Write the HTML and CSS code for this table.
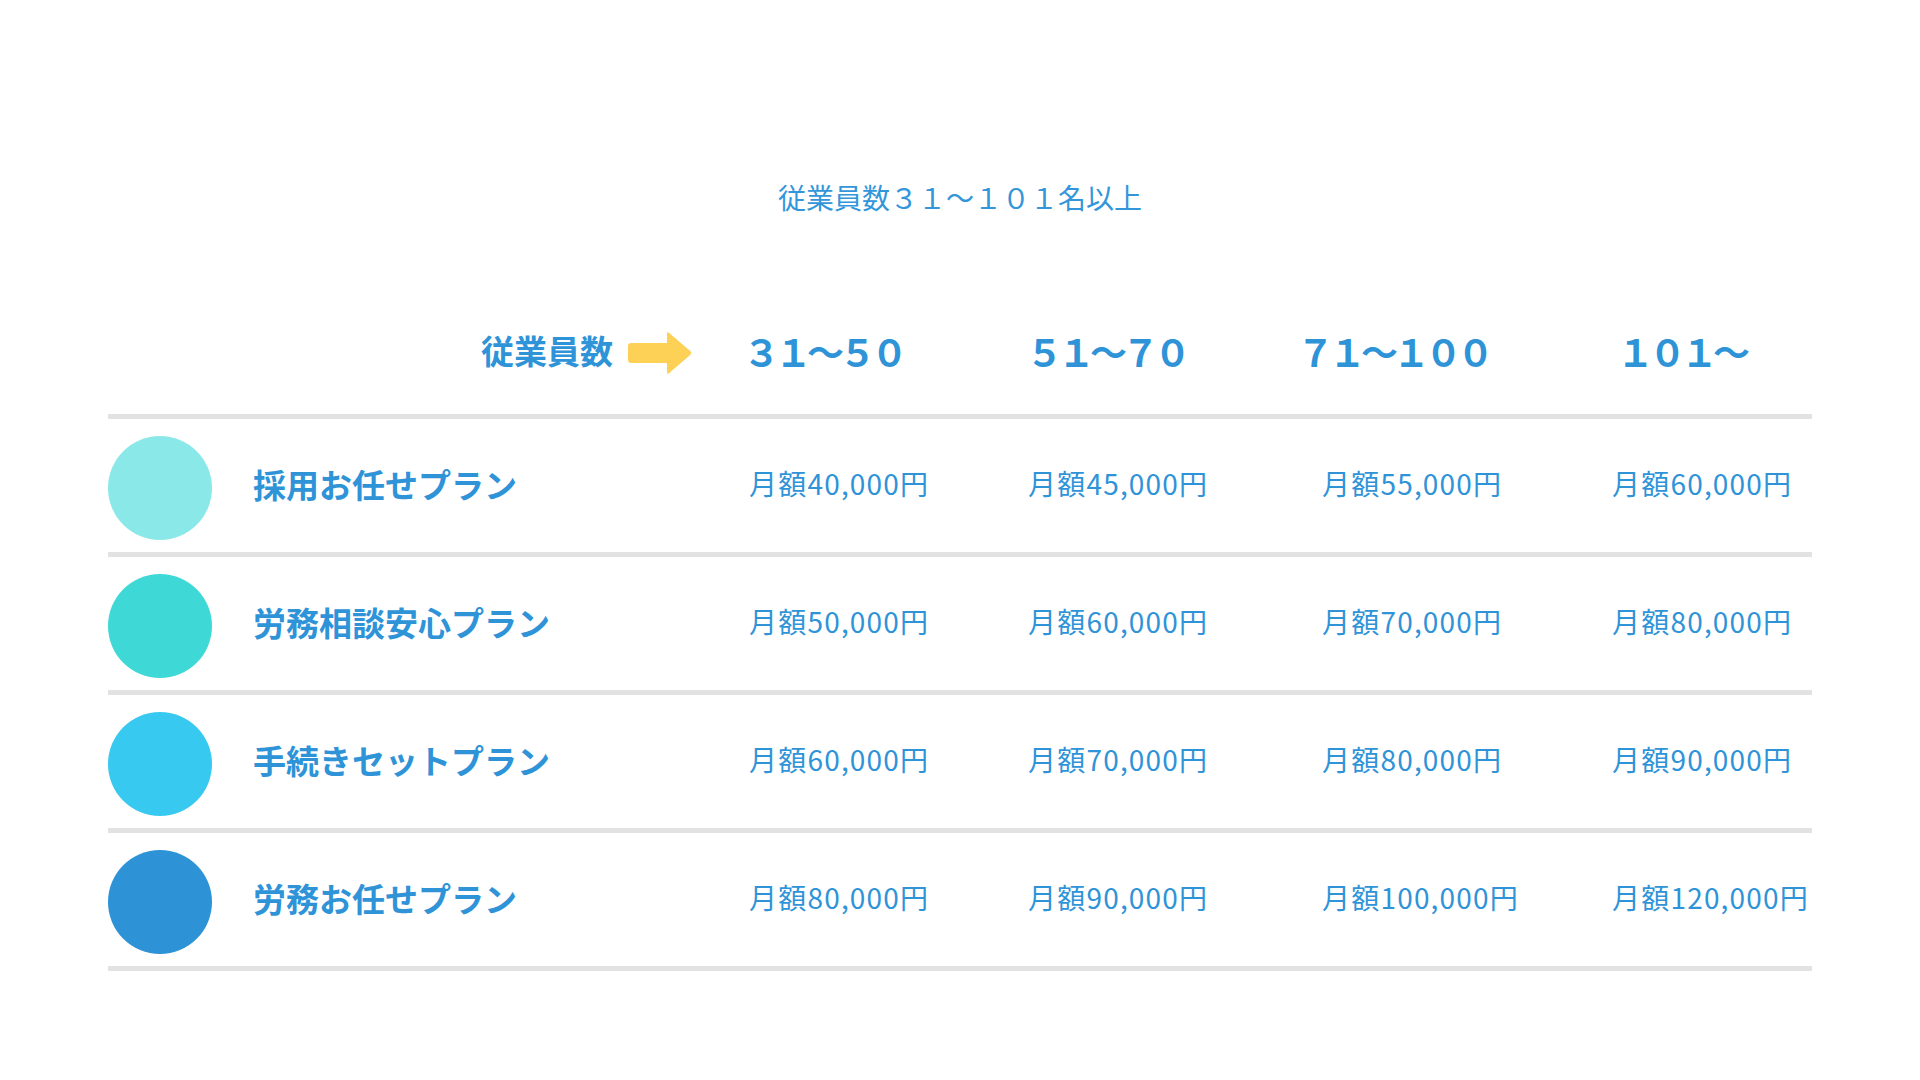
FILE: index.html
```html
<!DOCTYPE html>
<html lang="ja">
<head>
<meta charset="utf-8">
<title>料金表</title>
<link rel="stylesheet" href="styles.css">
</head>
<body>
<main class="page">
  <h1 class="title">従業員数３１～１０１名以上</h1>

  <div class="head-row">
    <div class="head-label">
      <span class="head-text">従業員数</span>
      <svg class="arrow" width="64" height="44" viewBox="0 0 64 44" aria-hidden="true">
        <path d="M3 12 H39 V3 Q39 0 41.5 2.2 L62.5 20.2 Q64 22 62.5 23.8 L41.5 41.8 Q39 44 39 41 V32 H3 Q0 32 0 29 V15 Q0 12 3 12 Z" fill="#FDD155"/>
      </svg>
    </div>
    <div class="head-cell">３１～５０</div>
    <div class="head-cell">５１～７０</div>
    <div class="head-cell">７１～１００</div>
    <div class="head-cell">１０１～</div>
  </div>

  <div class="table">
    <div class="row">
      <div class="plan"><span class="dot dot-1"></span><span class="plan-name">採用お任せプラン</span></div>
      <div class="price">月額40,000円</div>
      <div class="price">月額45,000円</div>
      <div class="price">月額55,000円</div>
      <div class="price">月額60,000円</div>
    </div>
    <div class="row">
      <div class="plan"><span class="dot dot-2"></span><span class="plan-name">労務相談安心プラン</span></div>
      <div class="price">月額50,000円</div>
      <div class="price">月額60,000円</div>
      <div class="price">月額70,000円</div>
      <div class="price">月額80,000円</div>
    </div>
    <div class="row">
      <div class="plan"><span class="dot dot-3"></span><span class="plan-name">手続きセットプラン</span></div>
      <div class="price">月額60,000円</div>
      <div class="price">月額70,000円</div>
      <div class="price">月額80,000円</div>
      <div class="price">月額90,000円</div>
    </div>
    <div class="row row-last">
      <div class="plan"><span class="dot dot-4"></span><span class="plan-name">労務お任せプラン</span></div>
      <div class="price">月額80,000円</div>
      <div class="price">月額90,000円</div>
      <div class="price">月額100,000円</div>
      <div class="price">月額120,000円</div>
    </div>
  </div>
</main>
</body>
</html>
```

FILE: styles.css
```css
* { box-sizing: border-box; }

html, body {
  margin: 0;
  padding: 0;
  background: #ffffff;
}

body {
  font-family: "Noto Sans CJK JP", "Noto Sans", sans-serif;
  color: #2f93d8;
}

.page {
  width: 1920px;
  height: 1080px;
  padding: 177px 108px 0 108px;
}

.title {
  margin: 0;
  font-size: 28px;
  font-weight: 400;
  line-height: 40px;
  text-align: center;
  color: #3396da;
}

.head-row {
  display: grid;
  grid-template-columns: 641px 283px 271px 320px 1fr;
  align-items: center;
  height: 60px;
  margin-top: 104px;
  margin-bottom: 33px;
}

.head-label {
  display: flex;
  align-items: center;
  justify-content: flex-end;
  gap: 15px;
  padding-right: 57px;
}

.head-text {
  font-size: 33px;
  font-weight: 700;
  line-height: 40px;
  padding-bottom: 2px;
}

.arrow {
  display: block;
  margin-top: 4px;
}

.head-cell {
  font-family: "Noto Sans CJK JP", sans-serif;
  font-size: 37px;
  font-weight: 700;
  letter-spacing: -5px;
  line-height: 44px;
  white-space: nowrap;
  margin-left: -6px;
}

.table {
  display: flex;
  flex-direction: column;
}

.row {
  display: grid;
  grid-template-columns: 641px 279px 294px 290px 1fr;
  align-items: center;
  height: 138px;
  border-top: 5px solid #e2e2e2;
}

.row-last {
  height: 143px;
  border-bottom: 5px solid #e2e2e2;
}

.plan {
  display: flex;
  align-items: center;
  gap: 41px;
}

.dot {
  display: block;
  width: 104px;
  height: 104px;
  border-radius: 50%;
  margin-top: 4px;
  flex: none;
}

.dot-1 { background: #8ae9e8; }
.dot-2 { background: #3ed9d6; }
.dot-3 { background: #38c9f0; }
.dot-4 { background: #2e92d6; }

.plan-name {
  font-size: 33px;
  font-weight: 700;
  line-height: 40px;
  white-space: nowrap;
  margin-bottom: 3px;
}

.price {
  font-size: 28px;
  font-weight: 400;
  line-height: 40px;
  letter-spacing: 1.2px;
  white-space: nowrap;
  margin-bottom: 5px;
}
```
